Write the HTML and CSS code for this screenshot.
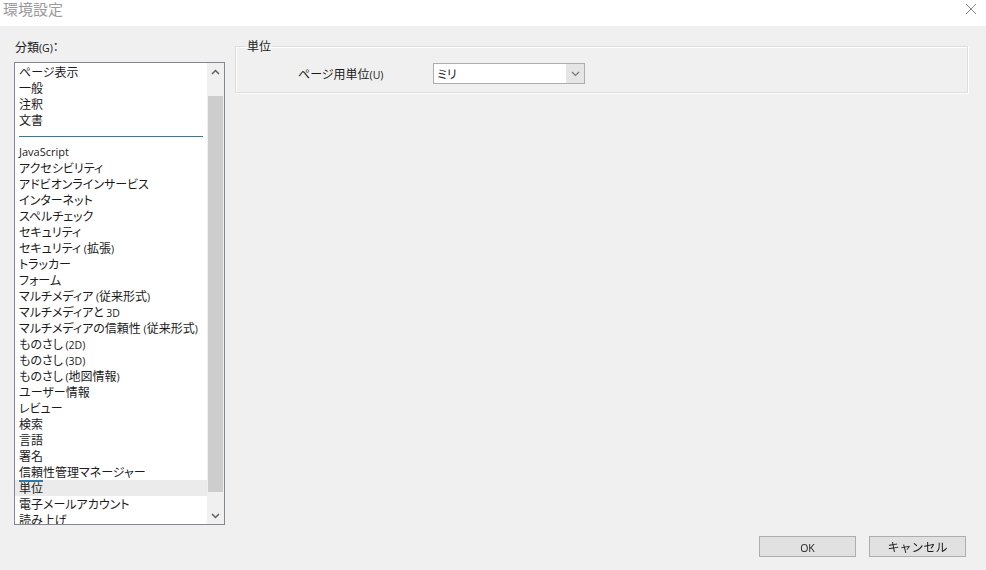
FILE: index.html
```html
<!DOCTYPE html>
<html lang="ja">
<head>
    <meta charset="UTF-8">
    <title>環境設定</title>
    <link rel="stylesheet" href="styles.css">
</head>
<body>
    <div class="titlebar">
        <span class="title">環境設定</span>
        <svg class="close" width="12" height="12" viewBox="0 0 12 12">
            <path d="M1 1 L11 11 M11 1 L1 11" stroke="#8a8a8a" stroke-width="1" fill="none"/>
        </svg>
    </div>

    <div class="dialog">
        <div class="side">
            <div class="side-label">分類<span class="lat">(G)</span>：</div>
            <div class="listbox">
                <ul class="items">
                    <li>ページ表示</li>
                    <li>一般</li>
                    <li>注釈</li>
                    <li>文書</li>
                    <li class="sep"><span></span></li>
                    <li class="lat">JavaScript</li>
                    <li>アクセシビリティ</li>
                    <li>アドビオンラインサービス</li>
                    <li>インターネット</li>
                    <li>スペルチェック</li>
                    <li>セキュリティ</li>
                    <li>セキュリティ <span class="lat">(</span>拡張<span class="lat">)</span></li>
                    <li>トラッカー</li>
                    <li>フォーム</li>
                    <li>マルチメディア <span class="lat">(</span>従来形式<span class="lat">)</span></li>
                    <li>マルチメディアと <span class="lat">3D</span></li>
                    <li>マルチメディアの信頼性 <span class="lat">(</span>従来形式<span class="lat">)</span></li>
                    <li>ものさし <span class="lat">(2D)</span></li>
                    <li>ものさし <span class="lat">(3D)</span></li>
                    <li>ものさし <span class="lat">(</span>地図情報<span class="lat">)</span></li>
                    <li>ユーザー情報</li>
                    <li>レビュー</li>
                    <li>検索</li>
                    <li>言語</li>
                    <li>署名</li>
                    <li><span class="mark">信頼</span>性管理マネージャー</li>
                    <li class="selected">単位</li>
                    <li>電子メールアカウント</li>
                    <li>読み上げ</li>
                </ul>
                <div class="scrollbar">
                    <div class="arrow">
                        <svg width="9" height="6" viewBox="0 0 9 6"><path d="M1 5 L4.5 1.5 L8 5" stroke="#606060" stroke-width="1.5" fill="none"/></svg>
                    </div>
                    <div class="track"><div class="thumb"></div></div>
                    <div class="arrow">
                        <svg width="9" height="6" viewBox="0 0 9 6"><path d="M1 1 L4.5 4.5 L8 1" stroke="#606060" stroke-width="1.5" fill="none"/></svg>
                    </div>
                </div>
            </div>
        </div>

        <fieldset class="group">
            <legend>単位</legend>
            <div class="field">
                <label class="field-label">ページ用単位<span class="lat">(U)</span></label>
                <div class="select">
                    <span class="select-value">ミリ</span>
                    <span class="select-arrow">
                        <svg width="9" height="6" viewBox="0 0 9 6"><path d="M1 1 L4.5 4.5 L8 1" stroke="#777" stroke-width="1.2" fill="none"/></svg>
                    </span>
                </div>
            </div>
        </fieldset>
    </div>

    <div class="buttons">
        <button class="btn" type="button"><span class="lat">OK</span></button>
        <button class="btn" type="button">キャンセル</button>
    </div>
</body>
</html>
```

FILE: styles.css
```css
body {
    margin: 0;
    width: 986px;
    height: 570px;
    background-color: #f0f0f0;
    font-family: "Noto Sans CJK JP", "Noto Sans", sans-serif;
    font-size: 12px;
    font-feature-settings: "palt";
    color: #1a1a1a;
    overflow: hidden;
}

.lat {
    font-family: "Open Sans", "Noto Sans", sans-serif;
    font-size: 10.5px;
}

.titlebar {
    height: 26px;
    background: #fff;
    display: flex;
    align-items: flex-start;
    justify-content: space-between;
}

.title {
    font-size: 15px;
    line-height: 18px;
    color: #9a9a9a;
    padding-left: 3px;
    font-feature-settings: normal;
}

.close {
    margin: 3px 9px 0 0;
}

.dialog {
    display: flex;
    gap: 10px;
    padding: 13px 18px 0 14px;
}

.side {
    width: 211px;
    flex: none;
}

.side-label {
    height: 23px;
    line-height: 16px;
    padding-left: 1px;
}

.listbox {
    height: 461px;
    border: 1px solid #828790;
    background: #fff;
    display: flex;
    overflow: hidden;
}

.items {
    list-style: none;
    margin: 0;
    padding: 1px 0 0;
    flex: 1;
    overflow: hidden;
}

.items li {
    height: 16px;
    line-height: 16px;
    padding-left: 4px;
    white-space: nowrap;
}

.items li.lat {
    font-size: 11px;
}

.items li.sep {
    display: flex;
    align-items: center;
    padding-right: 4px;
}

.items li.sep span {
    flex: 1;
    height: 1px;
    margin-top: 1px;
    background: #2c7aa6;
}

.items li.selected {
    background: #ebebeb;
}

.mark {
    border-bottom: 2px solid #2c7aa6;
}

.scrollbar {
    width: 17px;
    flex: none;
    background: #f0f0f0;
    display: flex;
    flex-direction: column;
}

.arrow {
    height: 17px;
    display: flex;
    align-items: center;
    justify-content: center;
}

.track {
    flex: 1;
    padding: 16px 1px 0;
}

.thumb {
    height: 396px;
    background: #cdcdcd;
}

.group {
    flex: 1;
    margin: 0;
    padding: 10px 10px 0 10px;
    height: 54px;
    box-sizing: border-box;
    border: 1px solid #dcdcdc;
    box-shadow: inset 1px 1px 0 #fff, 1px 1px 0 #fff;
}

.group legend {
    padding: 0 1px;
    line-height: 14px;
}

.field {
    display: flex;
    align-items: center;
}

.field-label {
    width: 135px;
    margin-left: 52px;
}

.select {
    width: 152px;
    height: 21px;
    box-sizing: border-box;
    border: 1px solid #adadad;
    background: #fff;
    display: flex;
}

.select-value {
    flex: 1;
    line-height: 19px;
    padding-left: 3px;
}

.select-arrow {
    width: 18px;
    background: #e5e5e5;
    display: flex;
    align-items: center;
    justify-content: center;
}

.buttons {
    position: fixed;
    left: 0;
    right: 20px;
    bottom: 13px;
    display: flex;
    justify-content: flex-end;
    gap: 13px;
}

.btn {
    width: 97px;
    height: 21px;
    border: 1px solid #adadad;
    background: #e1e1e1;
    font-family: inherit;
    font-size: 12px;
    color: #1a1a1a;
    padding: 0;
}
```
